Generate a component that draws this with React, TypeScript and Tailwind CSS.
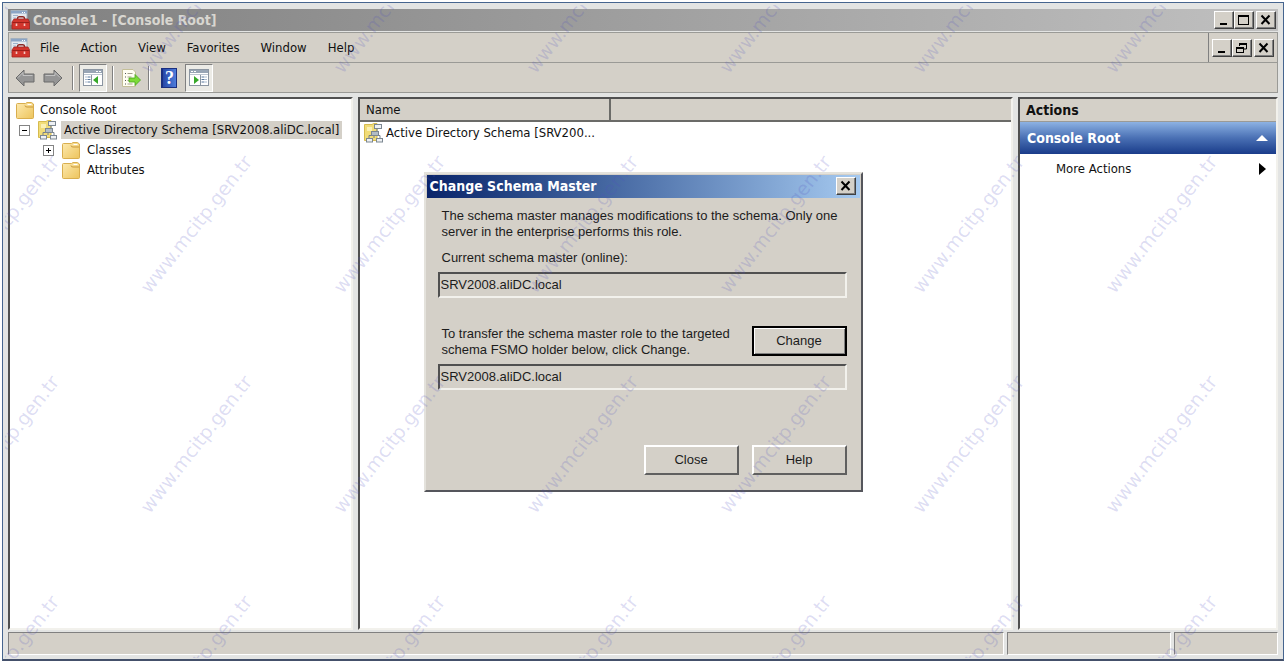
import type { ReactNode } from "react";

const UI_FONT = "font-['DejaVu_Sans_Condensed','DejaVu_Sans',sans-serif]";
const RAISED =
  "border border-t-white border-l-white border-r-[#404040] border-b-[#404040] shadow-[inset_-1px_-1px_0_#808080]";
const SUNKEN =
  "border-2 border-t-[#505050] border-l-[#505050] border-r-[#f2f1ec] border-b-[#f2f1ec]";
const STATUS_CELL =
  "border border-t-[#808080] border-l-[#808080] border-r-white border-b-white bg-[#d4d0c8]";

const MENU = ["File", "Action", "View", "Favorites", "Window", "Help"];
const WATERMARKS = Array.from({ length: 28 }, (_, i) => i);

function ToolboxIcon() {
  return (
    <svg width="20" height="20" viewBox="0 0 20 20" aria-hidden="true">
      <rect x="1" y="0.5" width="16" height="14" fill="#e4e9ee" stroke="#a3b0bd" />
      <rect x="1" y="1" width="16" height="2.5" fill="#8ba5c6" />
      <path d="M12 2.5h1M14 2.5h1" stroke="#fff" />
      <path d="M3 5.5h5M3 8h3" stroke="#9db4cf" />
      <path d="M7.5 10V8.5Q7.5 6.8 9 6.8h4Q14.5 6.8 14.5 8.5V10" fill="none" stroke="#8c2a26" strokeWidth="1.6" />
      <path d="M4 9h14l1.5 3v7H2v-7z" fill="#d2352d" stroke="#a5241f" strokeWidth="0.8" />
      <path d="M2.5 12.5h16.5" stroke="#9b1f1a" />
      <path d="M6.5 13.5v2.5M14.5 13.5v2.5" stroke="#f3c9c4" strokeWidth="1.6" />
    </svg>
  );
}

function FolderIcon() {
  return (
    <svg width="18" height="17" viewBox="0 0 18 17" className="shrink-0" aria-hidden="true">
      <defs>
        <linearGradient id="folder" x1="0" y1="0" x2="1" y2="1">
          <stop offset="0" stopColor="#fdeab0" />
          <stop offset="1" stopColor="#edc45c" />
        </linearGradient>
      </defs>
      <path d="M0.5 2.5Q0.5 1.5 1.5 1.5H9.5L11 0.5H15.5L17.5 2V15.5Q17.5 16.5 16.5 16.5H1.5Q0.5 16.5 0.5 15.5Z" fill="url(#folder)" stroke="#d9ae4e" />
      <path d="M9 3.5Q9 5 11 5H17" fill="none" stroke="#c9983a" />
      <path d="M11.5 2.5h4" stroke="#fff" />
    </svg>
  );
}

function SchemaIcon() {
  return (
    <svg width="20" height="20" viewBox="0 0 20 20" className="shrink-0" aria-hidden="true">
      <path d="M0.5 1.5H8L9.5 0.5H13V17.5H0.5Z" fill="#f1dc78" stroke="#d6bb4e" />
      <path d="M3 4h5v4H3z" fill="#faf0b4" />
      <path d="M13 5v4M10 12v3M5 15v-2.5h11V15" fill="none" stroke="#75808a" />
      <g fill="#eef1f4" stroke="#7c8791">
        <rect x="10.5" y="1.5" width="7" height="4" />
        <rect x="7.5" y="8.5" width="7" height="4" fill="#b3bdc5" />
        <rect x="2.5" y="15.5" width="6" height="3.5" />
        <rect x="12.5" y="15.5" width="6" height="3.5" />
      </g>
    </svg>
  );
}

function ArrowIcon({ flip = false }: { flip?: boolean }) {
  return (
    <svg width="20" height="18" viewBox="0 0 20 18" className={flip ? "-scale-x-100" : ""} aria-hidden="true">
      <path d="M1 9L9 1V5H19V13H9V17Z" fill="#959595" stroke="#6b6b6b" strokeLinejoin="round" />
      <path d="M3 8.5L8 3.5V6.5H17.5" fill="none" stroke="#c2c2c2" />
    </svg>
  );
}

function PaneIcon({ flip = false }: { flip?: boolean }) {
  return (
    <svg width="20" height="17" viewBox="0 0 20 17" className={flip ? "-scale-x-100" : ""} aria-hidden="true">
      <rect x="0.5" y="0.5" width="19" height="16" fill="#fff" stroke="#8b95a1" />
      <rect x="1" y="1" width="18" height="3" fill="#98a5b5" />
      <path d="M1 5.5h18" stroke="#bdc6d1" />
      <path d="M8.5 6v10" stroke="#8b95a1" />
      <path d="M2.5 8h5M2.5 10.5h5M2.5 13h5" stroke="#57779c" strokeDasharray="1 1 3" />
      <path d="M15 7v8L10 11z" fill="#37a829" />
      <path d="M13 2.5h2M16 2.5h2" stroke="#fff" />
    </svg>
  );
}

function ExportIcon() {
  return (
    <svg width="20" height="20" viewBox="0 0 20 20" aria-hidden="true">
      <path d="M1.5 1.5H12L14.5 4V18.5H1.5Z" fill="#fffef2" stroke="#c4bf98" />
      <path d="M4 5.5h1M4 9h1M4 12.5h1M4 16h1" stroke="#555" />
      <path d="M6.5 5.5h5M6.5 9h4M6.5 12.5h3M6.5 16h5" stroke="#a3a08a" />
      <path d="M8 10h6V6.5L19.5 12L14 17.5V14H8Z" fill="#7ddb38" stroke="#48a61b" strokeWidth="0.8" />
    </svg>
  );
}

function HelpIcon() {
  return (
    <span className="flex h-5 w-4 items-center justify-center border border-l-2 border-[#1b2f80] bg-linear-to-r from-[#2747a8] to-[#4f7ddb] font-['Liberation_Serif',serif] text-lg leading-none font-bold text-white">
      ?
    </span>
  );
}

type Glyph = "minimize" | "maximize" | "restore" | "close";

function CaptionButton({ glyph, label }: { glyph: Glyph; label: string }) {
  return (
    <button
      type="button"
      aria-label={label}
      className={`flex h-[18px] w-[20px] items-center justify-center bg-[#d4d0c8] ${RAISED}`}
    >
      <svg width="14" height="12" viewBox="0 0 14 12" fill="none" stroke="#000" aria-hidden="true">
        {glyph === "minimize" && <path d="M3 10h7" strokeWidth="2" />}
        {glyph === "maximize" && (
          <>
            <rect x="1.5" y="1.5" width="10" height="9" />
            <path d="M1 2h11" strokeWidth="2" />
          </>
        )}
        {glyph === "restore" && (
          <>
            <path d="M4.5 4V1.5h7v5.5H9" />
            <path d="M4 2h8" strokeWidth="2" />
            <rect x="1.5" y="5.5" width="7" height="5" />
            <path d="M1 6h8" strokeWidth="2" />
          </>
        )}
        {glyph === "close" && <path d="M2.5 1.5l8 8.5M10.5 1.5l-8 8.5" strokeWidth="2" />}
      </svg>
    </button>
  );
}

interface ToolButtonProps {
  label: string;
  active?: boolean;
  narrow?: boolean;
  children: ReactNode;
}

function ToolButton({ label, active = false, narrow = false, children }: ToolButtonProps) {
  return (
    <button
      type="button"
      aria-label={label}
      className={`flex h-7 items-center justify-center ${narrow ? "w-6" : "w-7"} ${
        active ? "border border-t-[#808080] border-l-[#808080] border-r-white border-b-white bg-[#ecebe6]" : ""
      }`}
    >
      {children}
    </button>
  );
}

function Separator() {
  return <span className="mx-[5px] h-6 w-[2px] border-l border-[#808080] bg-white" />;
}

function Expander({ open }: { open: boolean }) {
  return (
    <button type="button" aria-label={open ? "Collapse" : "Expand"} className="shrink-0">
      <svg width="11" height="11" viewBox="0 0 11 11" fill="none" aria-hidden="true">
        <rect x="0.5" y="0.5" width="10" height="10" fill="#fff" stroke="#848484" />
        <path d={open ? "M3 5.5h5" : "M3 5.5h5M5.5 3v5"} stroke="#000" />
      </svg>
    </button>
  );
}

function DialogButton({ primary = false, children }: { primary?: boolean; children: ReactNode }) {
  return (
    <button
      type="button"
      className={`h-[30px] w-[95px] ${
        primary
          ? "border-2 border-black shadow-[inset_1px_1px_0_#fff,inset_-1px_-1px_0_#808080]"
          : "border-2 border-t-white border-l-white border-r-[#606060] border-b-[#606060]"
      }`}
    >
      {children}
    </button>
  );
}

function ChangeMasterDialog() {
  return (
    <div
      role="dialog"
      aria-labelledby="dialog-title"
      className="h-[320px] w-[439px] border-2 border-t-[#e4e2dc] border-l-[#e4e2dc] border-r-[#55565c] border-b-[#55565c] bg-[#d4d0c8] p-px font-['Liberation_Sans',sans-serif] text-[13px] leading-4 text-[#1c1c1c]"
    >
      <div className="flex h-[23px] items-center justify-between bg-linear-to-r from-[#0a246a] to-[#a6caf0] pr-1 pl-[3px]">
        <h2 id="dialog-title" className={`text-sm font-bold text-white ${UI_FONT}`}>
          Change Schema Master
        </h2>
        <CaptionButton glyph="close" label="Close dialog" />
      </div>
      <div className="pt-[10px] pr-[13px] pl-[11px]">
        <p className="pl-1">
          The schema master manages modifications to the schema. Only one
          <br />
          server in the enterprise performs this role.
        </p>
        <label htmlFor="current-master" className="mt-[10px] block pl-1">
          Current schema master (online):
        </label>
        <input
          id="current-master"
          readOnly
          defaultValue="SRV2008.aliDC.local"
          className={`mt-[6px] block h-[26px] w-full px-px ${SUNKEN}`}
        />
        <div className="mt-[28px] flex items-start justify-between">
          <label htmlFor="target-master" className="pl-1">
            To transfer the schema master role to the targeted
            <br />
            schema FSMO holder below, click Change.
          </label>
          <DialogButton primary>Change</DialogButton>
        </div>
        <input
          id="target-master"
          readOnly
          defaultValue="SRV2008.aliDC.local"
          className={`mt-[6px] block h-[26px] w-full px-px ${SUNKEN}`}
        />
        <div className="mt-[55px] flex justify-end gap-[13px]">
          <DialogButton>Close</DialogButton>
          <DialogButton>Help</DialogButton>
        </div>
      </div>
    </div>
  );
}

export default function App() {
  return (
    <div className={`relative h-screen overflow-hidden bg-white p-[2px] text-[13px] leading-4 text-[#111] ${UI_FONT}`}>
      <div className="flex h-full flex-col border border-b-2 border-[#46658f] border-b-[#44506a] bg-[#e3e4e3] px-[5px] pt-[6px] pb-1">
        {/* Title bar */}
        <header className="flex h-[22px] shrink-0 items-center bg-linear-to-r from-[#808080] to-[#c0c0c0] px-[2px]">
          <ToolboxIcon />
          <h1 className="ml-[3px] flex-1 text-sm font-bold text-[#d8d6d0]">Console1 - [Console Root]</h1>
          <CaptionButton glyph="minimize" label="Minimize" />
          <CaptionButton glyph="maximize" label="Maximize" />
          <span className="w-[2px]" />
          <CaptionButton glyph="close" label="Close" />
        </header>

        {/* Menu bar */}
        <div className="mt-px flex h-[31px] shrink-0 border border-[#9a9a96] bg-[#d4d0c8]">
          <nav className="flex flex-1 items-center px-px" aria-label="Menu">
            <ToolboxIcon />
            <ul className="flex gap-px">
              {MENU.map((item) => (
                <li key={item}>
                  <button type="button" className="px-[10px]">
                    {item}
                  </button>
                </li>
              ))}
            </ul>
          </nav>
          <div className="flex items-center border-l border-[#808080] px-[3px]">
            <CaptionButton glyph="minimize" label="Minimize child window" />
            <CaptionButton glyph="restore" label="Restore child window" />
            <span className="w-[2px]" />
            <CaptionButton glyph="close" label="Close child window" />
          </div>
        </div>

        {/* Toolbar */}
        <div className="flex h-[30px] shrink-0 items-center border border-t-0 border-[#9a9a96] bg-[#d4d0c8] pl-[2px]">
          <ToolButton label="Back">
            <ArrowIcon />
          </ToolButton>
          <ToolButton label="Forward">
            <ArrowIcon flip />
          </ToolButton>
          <Separator />
          <ToolButton label="Show/hide console tree" active>
            <PaneIcon />
          </ToolButton>
          <Separator />
          <ToolButton label="Export list" narrow>
            <ExportIcon />
          </ToolButton>
          <Separator />
          <div className="flex gap-[2px]">
            <ToolButton label="Help">
              <HelpIcon />
            </ToolButton>
            <ToolButton label="Show/hide action pane" active>
              <PaneIcon flip />
            </ToolButton>
          </div>
        </div>

        <main className="mt-1 flex min-h-0 flex-1 gap-[5px]">
          {/* Console tree */}
          <section className={`w-[345px] shrink-0 bg-white pt-px ${SUNKEN}`}>
            <ul>
              <li className="flex h-5 items-center pl-[6px]">
                <FolderIcon />
                <span className="ml-[6px]">Console Root</span>
              </li>
              <li className="flex h-5 items-center pl-[9px]">
                <Expander open />
                <span className="ml-2 flex">
                  <SchemaIcon />
                </span>
                <span className="ml-[3px] bg-[#d4d0c8] px-[3px] py-px whitespace-nowrap">
                  Active Directory Schema [SRV2008.aliDC.local]
                </span>
              </li>
              <li className="flex h-5 items-center pl-[33px]">
                <Expander open={false} />
                <span className="ml-2 flex">
                  <FolderIcon />
                </span>
                <span className="ml-[7px]">Classes</span>
              </li>
              <li className="flex h-5 items-center pl-[52px]">
                <FolderIcon />
                <span className="ml-[7px]">Attributes</span>
              </li>
            </ul>
          </section>

          {/* Result list */}
          <section className={`min-w-0 flex-1 bg-white ${SUNKEN}`}>
            <table className="w-full table-fixed border-collapse text-left">
              <thead>
                <tr className="h-[22px] border-b-2 border-[#6b6b68] bg-[#d4d0c8]">
                  <th className="w-[250px] border-r-2 border-[#6b6b68] px-[6px] font-normal">Name</th>
                  <th aria-label="Empty column" />
                </tr>
              </thead>
              <tbody>
                <tr className="h-[22px]">
                  <td>
                    <span className="flex items-center pl-1 whitespace-nowrap">
                      <SchemaIcon />
                      <span className="ml-[2px]">Active Directory Schema [SRV200...</span>
                    </span>
                  </td>
                  <td />
                </tr>
              </tbody>
            </table>
          </section>

          {/* Actions pane */}
          <aside className={`w-[260px] shrink-0 bg-white ${SUNKEN}`}>
            <h2 className="flex h-[23px] items-center border-b border-[#9a9a96] bg-[#d4d0c8] pl-[6px] text-sm font-bold">
              Actions
            </h2>
            <button
              type="button"
              className="flex h-8 w-full items-center justify-between bg-linear-to-b from-[#8db2e3] via-[#4a70b4] to-[#1a3c8a] pr-2 pl-[7px] text-sm font-bold text-white"
            >
              Console Root
              <svg width="12" height="6" viewBox="0 0 12 6" fill="#fff" aria-hidden="true">
                <path d="M6 0L12 6H0z" />
              </svg>
            </button>
            <button type="button" className="flex h-[30px] w-full items-center justify-between pr-[10px] pl-9">
              More Actions
              <svg width="7" height="12" viewBox="0 0 7 12" aria-hidden="true">
                <path d="M0 0L7 6L0 12z" />
              </svg>
            </button>
          </aside>
        </main>

        {/* Status bar */}
        <footer className="mt-[2px] flex h-[23px] shrink-0 gap-[3px]">
          <div className={`flex-1 ${STATUS_CELL}`} />
          <div className={`w-[164px] ${STATUS_CELL}`} />
          <div className={`w-[104px] ${STATUS_CELL}`} />
        </footer>
      </div>

      <div className="absolute inset-0 flex items-center justify-center">
        <ChangeMasterDialog />
      </div>

      {/* Repeating site watermark */}
      <div className="pointer-events-none absolute inset-[5px] overflow-hidden" aria-hidden="true">
        <div className="-mt-[111px] -ml-[99px] grid auto-rows-[220px] grid-cols-[repeat(7,193px)] font-['DejaVu_Sans',sans-serif] text-[19px] text-[#5050c0]/20">
          {WATERMARKS.map((i) => (
            <span key={i} className="flex items-center justify-center">
              <span className="-rotate-[52deg]">www.mcitp.gen.tr</span>
            </span>
          ))}
        </div>
      </div>
    </div>
  );
}
